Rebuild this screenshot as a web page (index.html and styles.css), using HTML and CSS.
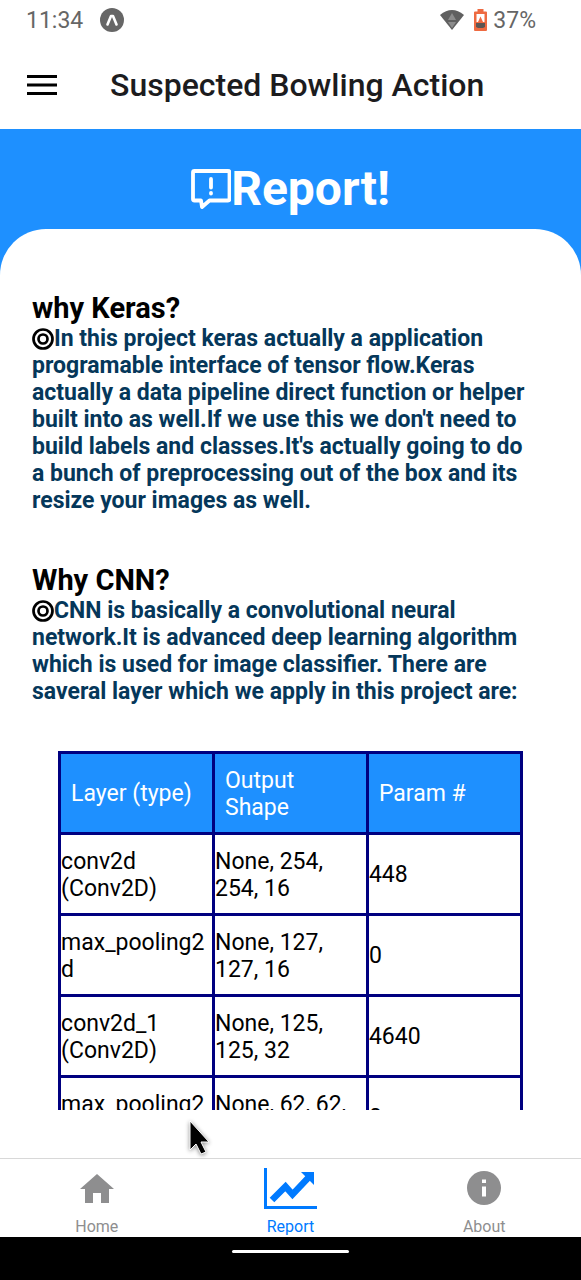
FILE: index.html
```html
<!DOCTYPE html>
<html lang="en">
<head>
<meta charset="utf-8">
<meta name="viewport" content="width=device-width, initial-scale=1">
<title>Suspected Bowling Action</title>
<link rel="stylesheet" href="styles.css">
</head>
<body>
<div class="screen">
  <div class="status">
    <span>11:34</span>
    <svg class="status-app" width="24" height="24" viewBox="0 0 24 24" aria-hidden="true"><circle cx="12" cy="12" r="12" fill="#666"/><path d="M7.500 16.500 11 8h2l3.500 8.500" fill="none" stroke="#fff" stroke-width="2.600" stroke-linecap="round" stroke-linejoin="round"/></svg>
    <span class="status-right">
      <svg width="24" height="20" viewBox="0 0 24 20" aria-hidden="true"><path d="M0 5Q12-5 24 5L12 20Z" fill="#606060"/><path d="M12 3 8 10h8Z" fill="#8c8c8c"/><path d="M8 12h8l-4 6Z" fill="#8c8c8c"/></svg>
      <svg class="battery" width="13" height="22" viewBox="0 0 13 22" aria-hidden="true"><path d="M3.500 0h6v2.500H12a1 1 0 0 1 1 1V21a1 1 0 0 1-1 1H1a1 1 0 0 1-1-1V3.500a1 1 0 0 1 1-1h2.500Z" fill="#ee6a41"/><path d="M2.500 5h8v8h-8Z" fill="#fff"/><path d="M6.500 7.500 9 13H4Z" fill="#ee6a41"/><path d="M2 14h9v4l-2 1H4l-2-1Z" fill="#5c5552"/></svg>
      <span>37%</span>
    </span>
  </div>
  <header class="appbar">
    <button class="menu" type="button" aria-label="Open menu"><svg width="30" height="20" viewBox="0 0 30 20" aria-hidden="true"><path d="M0 1.500h30M0 10h30M0 18.500h30" stroke="#000" stroke-width="3"/></svg></button>
    <h1 class="appbar-title">Suspected Bowling Action</h1>
  </header>
  <main class="main">
    <div class="hero">
      <svg class="hero-icon" width="40" height="40" viewBox="0 0 40 40" fill="none" stroke="#fff" stroke-width="3.800" stroke-linecap="round" stroke-linejoin="round" aria-hidden="true"><path d="M3.500 2h33.500a1.500 1.500 0 0 1 1.500 1.500V30a1.500 1.500 0 0 1-1.500 1.500H18.500L11 38 10 31.500H3.500A1.500 1.500 0 0 1 2 30V3.500A1.500 1.500 0 0 1 3.500 2Z"/><path d="M20 10v8.500M20 24v.5"/></svg>
      <h2 class="hero-title">Report!</h2>
    </div>
    <div class="sheet">
      <div class="scroll">
        <section class="section">
          <h3 class="heading">why Keras?</h3>
          <p class="text"><svg class="bullet" width="22" height="22" viewBox="0 0 22 22" fill="none" stroke="#000" stroke-width="2.700" aria-hidden="true"><circle cx="11" cy="11" r="9.500"/><circle cx="11" cy="11" r="4.500"/></svg>In this project keras actually a application programable interface of tensor flow.Keras actually a data pipeline direct function or helper built into as well.If we use this we don't need to build labels and classes.It's actually going to do a bunch of preprocessing out of the box and its resize your images as well.</p>
        </section>
        <section class="section">
          <h3 class="heading">Why CNN?</h3>
          <p class="text"><svg class="bullet" width="22" height="22" viewBox="0 0 22 22" fill="none" stroke="#000" stroke-width="2.700" aria-hidden="true"><circle cx="11" cy="11" r="9.500"/><circle cx="11" cy="11" r="4.500"/></svg>CNN is basically a convolutional neural network.It is advanced deep learning algorithm which is used for image classifier. There are saveral layer which we apply in this project are:</p>
        </section>
        <table class="layers">
          <thead>
            <tr><th scope="col">Layer (type)</th><th scope="col">Output Shape</th><th scope="col">Param #</th></tr>
          </thead>
          <tbody>
            <tr><td>conv2d (Conv2D)</td><td>None, 254, 254, 16</td><td>448</td></tr>
            <tr><td>max_pooling2d</td><td>None, 127, 127, 16</td><td>0</td></tr>
            <tr><td>conv2d_1 (Conv2D)</td><td>None, 125, 125, 32</td><td>4640</td></tr>
            <tr><td>max_pooling2d</td><td>None, 62, 62, 32</td><td>0</td></tr>
          </tbody>
        </table>
      </div>
    </div>
  </main>
  <nav class="tabs">
    <a class="tab" href="#home"><span class="tab-icon"><svg width="34" height="29" viewBox="0 0 34 29" aria-hidden="true"><path d="M17 0 34 15h-5v14h-8V19h-8v10H5V15H0Z" fill="#8e8e8f"/></svg></span>Home</a>
    <a class="tab tab-active" href="#report" aria-current="page"><span class="tab-icon"><svg width="53" height="41" viewBox="0 0 53 41" fill="none" aria-hidden="true"><path d="M1.500 0v39.500H53" stroke="#007aff" stroke-width="3"/><path d="M8 32 21.500 18.500l7 8L45 9" stroke="#007aff" stroke-width="6.500"/><path d="M37 4h13v13Z" fill="#007aff"/></svg></span>Report</a>
    <a class="tab" href="#about"><span class="tab-icon"><svg width="34" height="34" viewBox="0 0 34 34" aria-hidden="true"><circle cx="17" cy="17" r="17" fill="#8e8e8f"/><path d="M15 8.500h4v3.500h-4ZM15 15.500h4v10h-4Z" fill="#fff"/></svg></span>About</a>
  </nav>
  <div class="gesture"><span class="gesture-bar"></span></div>
  <svg class="cursor" width="28" height="40" viewBox="0 0 28 40" aria-hidden="true"><path d="M3 3v29l6-6 5 10 5-2-5-10h8Z" fill="#000" stroke="#fff" stroke-width="1"/></svg>
</div>
</body>
</html>
```
FILE: styles.css
```css
* { box-sizing: border-box; }
body, h1, h2, h3, p { margin: 0; }
body {
  font-family: Roboto, "Liberation Sans", sans-serif;
  font-size: 23px;
  line-height: 27px;
  color: #000;
  background: #fff;
}
.screen {
  position: relative;
  display: flex;
  flex-direction: column;
  height: 100vh;
  overflow: hidden;
}
.status {
  display: flex;
  align-items: center;
  flex: none;
  height: 40px;
  padding: 0 45px 0 26px;
  gap: 17px;
  color: #666;
}
.status-right {
  display: flex;
  align-items: center;
  gap: 6px;
  margin-left: auto;
}
.battery { margin-left: 4px; }
.appbar {
  display: flex;
  align-items: center;
  flex: none;
  height: 89px;
  padding: 0 27px;
  gap: 53px;
}
.menu {
  display: flex;
  padding: 0;
  border: 0;
  background: none;
}
.appbar-title {
  font-size: 32px;
  font-weight: 500;
  line-height: 40px;
  color: #1c1c1e;
}
.main {
  display: flex;
  flex-direction: column;
  flex: 1;
  min-height: 0;
  background: #1e90ff;
}
.hero {
  display: flex;
  align-items: center;
  justify-content: center;
  flex: none;
  height: 100px;
  padding-top: 20px;
  color: #fff;
}
.hero-title {
  font-size: 48px;
  font-weight: 700;
  line-height: 56px;
}
.sheet {
  flex: 1;
  min-height: 0;
  padding: 62px 0 48px;
  border-radius: 46px 46px 0 0;
  background: #fff;
}
.scroll {
  height: 100%;
  overflow: hidden;
}
.section {
  padding: 0 48px 0 32px;
  margin-bottom: 49px;
}
.heading {
  font-size: 29px;
  font-weight: 700;
  line-height: 34px;
}
.text {
  font-weight: 700;
  color: #05375a;
}
.bullet { vertical-align: -4px; }
.layers {
  width: 80%;
  margin: -3px auto 0;
  table-layout: fixed;
  border-collapse: collapse;
}
.layers th,
.layers td {
  height: 81px;
  padding: 1px 0 0;
  border: 3px solid #000080;
  font-weight: 400;
  text-align: left;
  overflow-wrap: break-word;
}
.layers th {
  padding: 1px 10px 0;
  color: #fff;
  background: #1e90ff;
}
.tabs {
  display: flex;
  flex: none;
  height: 79px;
  border-top: 1px solid #d8d8d8;
}
.tab {
  display: flex;
  flex-direction: column;
  align-items: center;
  flex: 1;
  font-size: 16px;
  line-height: 20px;
  color: #8e8e8f;
  text-decoration: none;
}
.tab-active { color: #007aff; }
.tab-icon {
  display: flex;
  align-items: center;
  flex: none;
  height: 58px;
}
.gesture {
  display: flex;
  justify-content: center;
  flex: none;
  height: 43px;
  padding-top: 13px;
  background: #000;
}
.gesture-bar {
  width: 20%;
  height: 3px;
  border-radius: 2px;
  background: #fff;
}
.cursor {
  position: absolute;
  left: 187px;
  top: 1118px;
  filter: drop-shadow(0 1px 2px #888);
}
```
